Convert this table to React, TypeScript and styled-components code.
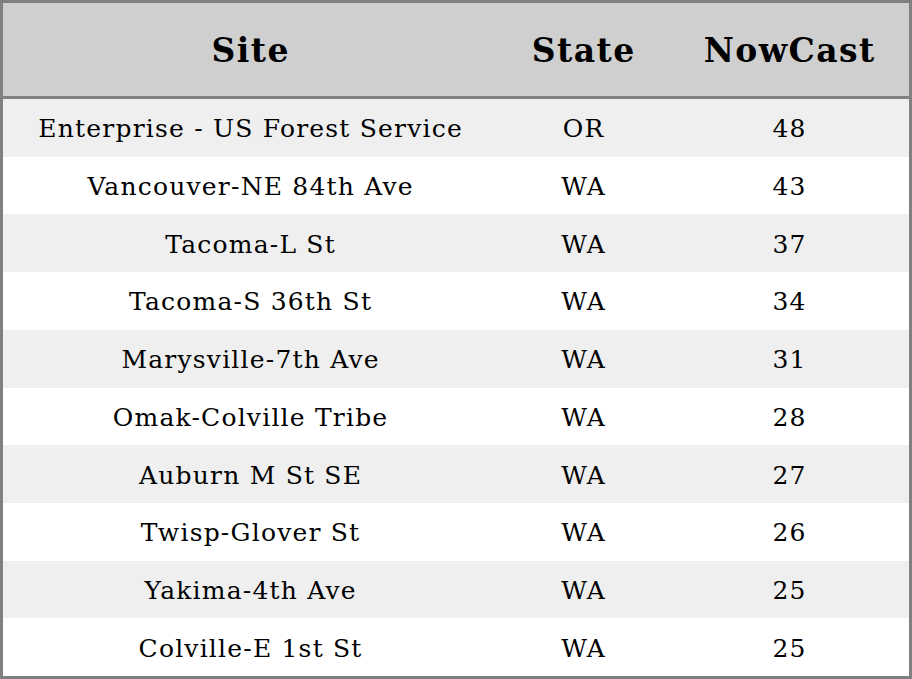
import React from "react";
import styled, { createGlobalStyle } from "styled-components";

const Global = createGlobalStyle`
  html, body { margin: 0; padding: 0; background: #ffffff; }
  * { box-sizing: border-box; }
`;

const Table = styled.div`
  width: 912px;
  height: 679px;
  border: 3px solid #808080;
  display: grid;
  grid-template-columns: 494px 172px 1fr;
  grid-template-rows: 96px repeat(10, 1fr);
  font-family: "DejaVu Serif", serif;
  color: #000;
`;

const HeadCell = styled.div`
  background: #cfcfcf;
  border-bottom: 3px solid #808080;
  display: flex;
  align-items: center;
  justify-content: center;
  font-size: 33px;
  font-weight: 700;
  letter-spacing: 1.4px;
  padding: 2px 0 0 1.4px;
`;

const Cell = styled.div<{ $odd: boolean }>`
  background: ${({ $odd }) => ($odd ? "#efefef" : "#ffffff")};
  display: flex;
  align-items: center;
  justify-content: center;
  font-size: 25px;
  letter-spacing: 1.2px;
  padding: 2px 0 0 1.2px;
`;

const rows = [
  { site: "Enterprise - US Forest Service", state: "OR", nowcast: 48 },
  { site: "Vancouver-NE 84th Ave", state: "WA", nowcast: 43 },
  { site: "Tacoma-L St", state: "WA", nowcast: 37 },
  { site: "Tacoma-S 36th St", state: "WA", nowcast: 34 },
  { site: "Marysville-7th Ave", state: "WA", nowcast: 31 },
  { site: "Omak-Colville Tribe", state: "WA", nowcast: 28 },
  { site: "Auburn M St SE", state: "WA", nowcast: 27 },
  { site: "Twisp-Glover St", state: "WA", nowcast: 26 },
  { site: "Yakima-4th Ave", state: "WA", nowcast: 25 },
  { site: "Colville-E 1st St", state: "WA", nowcast: 25 },
];

export default function App() {
  return (
    <>
      <Global />
      <Table>
        <HeadCell>Site</HeadCell>
        <HeadCell>State</HeadCell>
        <HeadCell>NowCast</HeadCell>
        {rows.map((r, i) => (
          <React.Fragment key={i}>
            <Cell $odd={i % 2 === 0}>{r.site}</Cell>
            <Cell $odd={i % 2 === 0}>{r.state}</Cell>
            <Cell $odd={i % 2 === 0}>{r.nowcast}</Cell>
          </React.Fragment>
        ))}
      </Table>
    </>
  );
}
